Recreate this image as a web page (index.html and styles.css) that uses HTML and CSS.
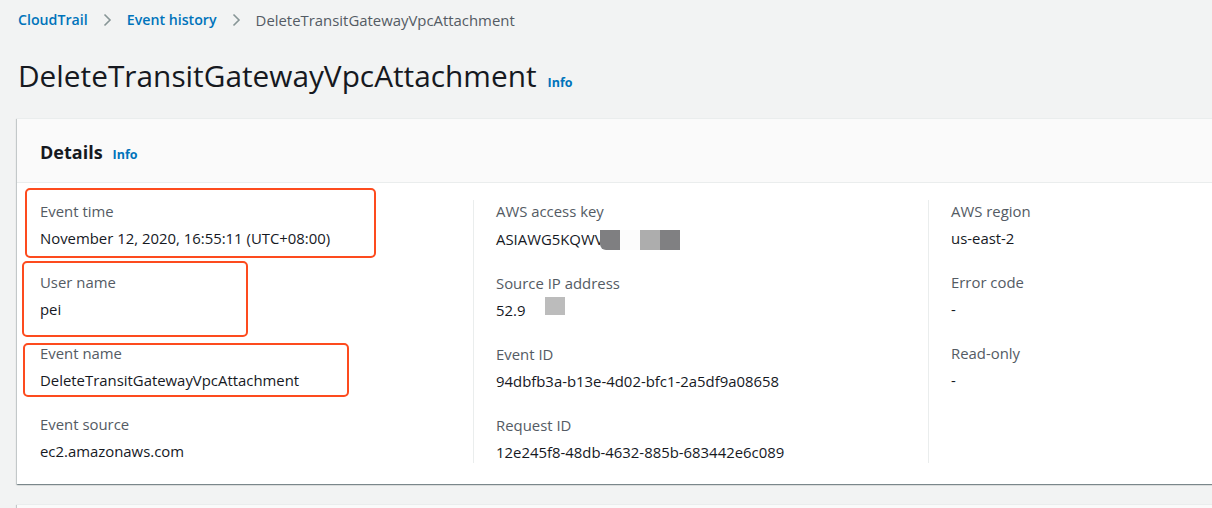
FILE: index.html
```html
<!DOCTYPE html>
<html>
<head>
<meta charset="utf-8">
<link rel="stylesheet" href="styles.css">
</head>
<body>
<div class="page">
  <nav class="breadcrumb">
    <a class="crumb-link">CloudTrail</a>
    <svg class="chev" width="16" height="16" viewBox="0 0 16 16"><path d="M5.5 2.5l5.5 5.5-5.5 5.5" fill="none" stroke="#879596" stroke-width="1.6"/></svg>
    <a class="crumb-link">Event history</a>
    <svg class="chev" width="16" height="16" viewBox="0 0 16 16"><path d="M5.5 2.5l5.5 5.5-5.5 5.5" fill="none" stroke="#879596" stroke-width="1.6"/></svg>
    <span class="crumb-current">DeleteTransitGatewayVpcAttachment</span>
  </nav>

  <div class="title-row">
    <h1 class="title">DeleteTransitGatewayVpcAttachment</h1>
    <a class="info">Info</a>
  </div>

  <section class="card">
    <header class="card-header">
      <h2 class="card-title">Details</h2>
      <a class="info">Info</a>
    </header>
    <div class="card-body">
      <div class="col">
        <div class="field"><div class="label">Event time</div><div class="value">November 12, 2020, 16:55:11 (UTC+08:00)</div></div>
        <div class="field"><div class="label">User name</div><div class="value">pei<span class="ghost"></span></div></div>
        <div class="field"><div class="label">Event name</div><div class="value">DeleteTransitGatewayVpcAttachment</div></div>
        <div class="field"><div class="label">Event source</div><div class="value">ec2.amazonaws.com</div></div>
      </div>
      <div class="col">
        <div class="field"><div class="label">AWS access key</div><div class="value">ASIAWG5KQWV<span class="redact"><i class="r1"></i><i class="r2"></i><i class="r3"></i><i class="r4"></i></span></div></div>
        <div class="field"><div class="label">Source IP address</div><div class="value">52.9<span class="redact-ip"></span></div></div>
        <div class="field"><div class="label">Event ID</div><div class="value">94dbfb3a-b13e-4d02-bfc1-2a5df9a08658</div></div>
        <div class="field"><div class="label">Request ID</div><div class="value">12e245f8-48db-4632-885b-683442e6c089</div></div>
      </div>
      <div class="col">
        <div class="field"><div class="label">AWS region</div><div class="value">us-east-2</div></div>
        <div class="field"><div class="label">Error code</div><div class="value">-</div></div>
        <div class="field"><div class="label">Read-only</div><div class="value">-</div></div>
      </div>
    </div>
  </section>

  <section class="card card-next">
    <header class="card-header"></header>
  </section>

  <div class="mark mark-1"></div>
  <div class="mark mark-2"></div>
  <div class="mark mark-3"></div>
</div>
</body>
</html>
```

FILE: styles.css
```css
html, body {
  margin: 0;
  padding: 0;
  overflow: hidden;
}
body {
  background: #f2f3f3;
  font-family: "Open Sans", "Liberation Sans", sans-serif;
  color: #16191f;
  width: 1212px;
  height: 508px;
}
.page {
  position: relative;
  padding-left: 17px;
}
.breadcrumb {
  display: flex;
  align-items: center;
  padding-top: 9px;
  height: 22px;
  line-height: 22px;
  padding-left: 1px;
}
.crumb-link {
  color: #0073bb;
  font-weight: 600;
  font-size: 14.2px;
}
.chev {
  margin: 0 12px 0 11px;
}
.crumb-current {
  color: #545b64;
  font-size: 14.9px;
}
.title-row {
  display: flex;
  align-items: baseline;
  margin-top: 27px;
  padding-left: 1px;
}
.title {
  margin: 0;
  font-size: 29.8px;
  line-height: 36px;
  font-weight: 400;
  color: #16191f;
}
.info {
  color: #0073bb;
  font-size: 12.5px;
  font-weight: 700;
  margin-left: 11px;
}
.card {
  width: 1400px;
  margin-top: 24px;
  background: #fff;
  box-shadow: 0 1px 1px 0 rgba(0, 28, 36, 0.3), 1px 1px 1px 0 rgba(0, 28, 36, 0.15), -1px 1px 1px 0 rgba(0, 28, 36, 0.15);
  border-top: 1px solid #eaeded;
}
.card-header {
  display: flex;
  align-items: baseline;
  background: #fafafa;
  padding: 21px 22px 18px 23px;
  border-bottom: 1px solid #eaeded;
}
.card-title {
  margin: 0;
  font-size: 18px;
  line-height: 24px;
  font-weight: 700;
}
.card-header .info {
  margin-left: 10px;
}
.card-body {
  display: grid;
  grid-template-columns: 455px 455px 455px;
  padding: 17px 0 21px 1px;
}
.col {
  display: flex;
  flex-direction: column;
  gap: 22px;
  padding-left: 22px;
  border-left: 1px solid #eaeded;
}
.col:first-child {
  border-left: 0;
}
.label {
  font-size: 14.9px;
  line-height: 22px;
  color: #545b64;
}
.value {
  font-size: 14.9px;
  line-height: 22px;
  margin-top: 5px;
  color: #16191f;
  display: flex;
  align-items: center;
}
.redact {
  display: inline-flex;
  margin-left: -4px;
  margin-top: 3px;
}
.redact i {
  display: block;
  width: 20px;
  height: 20px;
}
.r1 { background: #7f7f81; border-bottom-left-radius: 6px; }
.r2 { background: #fcfcfc; }
.r3 { background: #adadad; }
.r4 { background: #808082; }
.redact-ip {
  display: inline-block;
  width: 20px;
  height: 18px;
  background: #bcbcbc;
  margin-left: 20px;
  margin-top: -8px;
}
.card-next {
  margin-top: 20px;
  height: 80px;
}
.card-next .card-header {
  height: 40px;
}
.mark {
  position: absolute;
  border: 2.5px solid #fd4b1e;
  border-radius: 5px;
  box-sizing: border-box;
}
.mark-1 { left: 25px; top: 188px; width: 351px; height: 70px; }
.mark-2 { left: 22px; top: 261px; width: 226px; height: 76px; }
.mark-3 { left: 23px; top: 343px; width: 326px; height: 54px; }
```
